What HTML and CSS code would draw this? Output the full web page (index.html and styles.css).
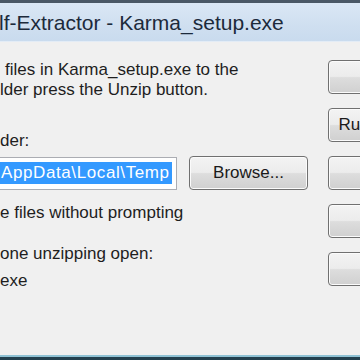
FILE: index.html
```html
<!DOCTYPE html>
<html>
<head>
<meta charset="utf-8">
<link rel="stylesheet" href="styles.css">
</head>
<body>
<div class="window">
  <div class="frame-top"></div>
  <div class="titlebar"><span class="title">lf-Extractor - Karma_setup.exe</span></div>
  <div class="content">
    <div class="left">
      <p class="msg"><span class="l1">files in Karma_setup.exe to the</span><br>lder press the Unzip button.</p>
      <div class="label">der:</div>
      <div class="row">
        <div class="input"><span class="sel">AppData\Local\Temp</span></div>
        <button class="btn browse">Browse...</button>
      </div>
      <div class="opt opt1">e files without prompting</div>
      <div class="opt opt2">one unzipping open:</div>
      <div class="opt opt3">exe</div>
    </div>
    <div class="right">
      <button class="btn side">Unzip</button>
      <button class="btn side">Run WinZip</button>
      <button class="btn side">Close</button>
      <button class="btn side">About</button>
      <button class="btn side">Help</button>
    </div>
  </div>
  <div class="frame-bottom"></div>
</div>
</body>
</html>
```
FILE: styles.css
```css
html, body {
  margin: 0;
  padding: 0;
  background: #f0f0f0;
}
.window {
  width: 360px;
  height: 360px;
  overflow: hidden;
  display: flex;
  flex-direction: column;
  font-family: "Liberation Sans", Arial, sans-serif;
  color: #1e1e1e;
}
.frame-top {
  height: 3px;
  background: #4a5866;
  flex: none;
}
.titlebar {
  height: 38px;
  flex: none;
  background: linear-gradient(#dae7f5 0%, #cfdff0 60%, #c9dbee 100%);
  border-bottom: 1px solid #e3ecf6;
  display: flex;
  align-items: center;
  white-space: nowrap;
}
.title {
  font-size: 21px;
  color: #1c2a3b;
  margin-left: -1px;
  margin-top: 2px;
}
.content {
  flex: 1;
  display: flex;
  min-height: 0;
}
.left {
  width: 328px;
  flex: none;
  font-size: 17px;
  white-space: nowrap;
}
.msg {
  margin: 18px 0 0 0;
  line-height: 20px;
}
.l1 {
  margin-left: 5px;
}
.label {
  margin-top: 31px;
  line-height: 20px;
}
.row {
  margin-top: 5px;
  display: flex;
  align-items: center;
  gap: 12px;
}
.input {
  width: 177px;
  height: 33px;
  box-sizing: border-box;
  border: 1px solid #abadb3;
  border-left: none;
  background: #fff;
  display: flex;
  align-items: center;
}
.sel {
  background: #3399ff;
  color: #fff;
  line-height: 22px;
  letter-spacing: 0.6px;
  padding: 0 2px 0 1px;
}
.btn {
  font-family: "Liberation Sans", Arial, sans-serif;
  font-size: 17px;
  color: #1a1a1a;
  border: 1px solid #707070;
  border-radius: 4px;
  background: linear-gradient(#f3f3f3 0%, #ececec 48%, #dddddd 52%, #d0d0d0 100%);
  box-shadow: inset 0 0 0 1px #fbfbfb;
  padding: 0;
  white-space: nowrap;
  flex: none;
}
.browse {
  width: 119px;
  height: 34px;
}
.opt {
  line-height: 20px;
}
.opt1 { margin-top: 13px; }
.opt2 { margin-top: 21px; }
.opt3 { margin-top: 7px; }
.right {
  flex: none;
  width: 110px;
  padding-top: 18px;
  display: flex;
  flex-direction: column;
  gap: 14px;
}
.side {
  width: 110px;
  height: 34px;
}
.frame-bottom {
  height: 5px;
  flex: none;
  border-top: 2px solid #8fc2d4;
  box-sizing: border-box;
  background: #23404e;
}
```
